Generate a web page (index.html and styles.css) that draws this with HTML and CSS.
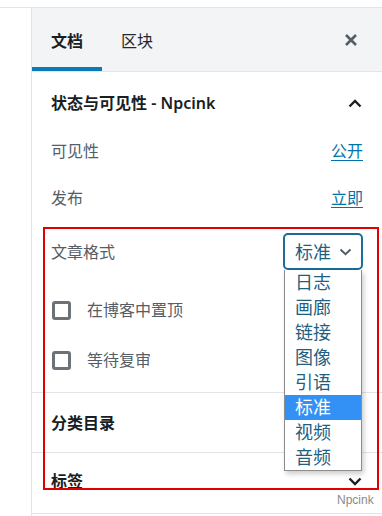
FILE: index.html
```html
<!DOCTYPE html>
<html lang="zh">
<head>
<meta charset="utf-8">
<title>文档设置</title>
<link rel="stylesheet" href="styles.css">
</head>
<body>
<div class="topbar"></div>
<div class="layout">
  <div class="gutter"></div>
  <aside class="panel">
    <div class="tabs">
      <div class="tab active">文档</div>
      <div class="tab">区块</div>
      <div class="spacer"></div>
      <button class="close" aria-label="关闭">
        <svg width="14" height="14" viewBox="0 0 14 14"><path d="M2 2 L12 12 M12 2 L2 12" stroke="#555d66" stroke-width="2.6" fill="none"/></svg>
      </button>
    </div>

    <section class="section">
      <div class="section-title">
        <span>状态与可见性 - Npcink</span>
        <svg class="chev" width="14" height="9" viewBox="0 0 14 9"><path d="M1.5 7.5 L7 2 L12.5 7.5" stroke="#1e1e1e" stroke-width="2.4" fill="none"/></svg>
      </div>
      <div class="row r1"><span class="label">可见性</span><a class="link">公开</a></div>
      <div class="row r2"><span class="label">发布</span><a class="link">立即</a></div>
      <div class="row format">
        <span class="label">文章格式</span>
        <div class="select-wrap">
          <div class="select">
            <span>标准</span>
            <svg width="13" height="8" viewBox="0 0 13 8"><path d="M1.5 1.5 L6.5 6.2 L11.5 1.5" stroke="#555d66" stroke-width="2" fill="none"/></svg>
          </div>
          <ul class="options">
            <li>日志</li>
            <li>画廊</li>
            <li>链接</li>
            <li>图像</li>
            <li>引语</li>
            <li class="selected">标准</li>
            <li>视频</li>
            <li>音频</li>
          </ul>
        </div>
      </div>
      <div class="check c1"><span class="box"></span><span class="label">在博客中置顶</span></div>
      <div class="check c2"><span class="box"></span><span class="label">等待复审</span></div>
    </section>

    <section class="section closed">
      <div class="section-title"><span>分类目录</span></div>
    </section>
    <section class="section closed last">
      <div class="section-title">
        <span>标签</span>
        <svg class="chev" width="14" height="9" viewBox="0 0 14 9"><path d="M1.5 1.5 L7 7 L12.5 1.5" stroke="#1e1e1e" stroke-width="2.4" fill="none"/></svg>
      </div>
    </section>
  </aside>
</div>
<div class="annotation"></div>
<div class="watermark">Npcink</div>
</body>
</html>
```

FILE: styles.css
```css
* { box-sizing: border-box; }
html, body { margin: 0; padding: 0; }
body {
  width: 382px;
  height: 516px;
  overflow: hidden;
  background: #fff;
  font-family: "Noto Sans", "Noto Sans CJK SC", sans-serif;
  color: #1e1e1e;
  position: relative;
}
.topbar {
  height: 8px;
  border-bottom: 1px solid #e2e4e7;
}
.layout {
  display: flex;
  height: 508px;
}
.gutter {
  width: 32px;
  border-right: 1px solid #e2e4e7;
}
.panel {
  flex: 1;
  display: flex;
  flex-direction: column;
}
.tabs {
  height: 64px;
  background: #f3f4f5;
  border-bottom: 1px solid #e2e4e7;
  display: flex;
  align-items: stretch;
}
.tab {
  padding: 0 19px;
  font-size: 16px;
  line-height: 20px;
  display: flex;
  align-items: center;
  padding-top: 2px;
  color: #23282d;
}
.tab.active {
  font-weight: 600;
  color: #191e23;
  box-shadow: inset 0 -4px 0 #0b7bb5;
}
.spacer { flex: 1; }
.close {
  border: 0;
  background: none;
  padding: 0;
  width: 14px;
  margin: 0 24px 0 0;
  display: flex;
  align-items: center;
}
.section {
  padding: 0 19px;
  border-bottom: 1px solid #e2e4e7;
}
.section-title {
  height: 62px;
  display: flex;
  align-items: center;
  justify-content: space-between;
  font-size: 16px;
  font-weight: 600;
  line-height: 20px;
  color: #191e23;
}
.chev { margin-right: 1px; }
.row {
  display: flex;
  align-items: center;
  justify-content: space-between;
  height: 34px;
  font-size: 16px;
  line-height: 20px;
}
.r2 { margin-top: 13px; }
.format { margin-top: 18px; height: 37px; }
.label { color: #555d66; }
.link {
  color: #0073aa;
  text-decoration: underline;
  text-underline-offset: 3px;
  cursor: pointer;
}
.select-wrap {
  position: relative;
  width: 80px;
  height: 37px;
}
.select {
  height: 37px;
  border: 2px solid #1a6c99;
  border-radius: 5px;
  display: flex;
  align-items: center;
  padding: 0 9px 0 10px;
  justify-content: space-between;
  font-size: 18px;
  line-height: 22px;
  color: #1f5f7f;
}
.options {
  position: absolute;
  left: 1px;
  top: 37px;
  width: 78px;
  margin: 0;
  padding: 0;
  list-style: none;
  background: #fff;
  border: 1px solid #8d8d8d;
  border-top: 0;
  box-shadow: 2px 3px 5px rgba(0,0,0,0.2);
  z-index: 2;
}
.options li {
  height: 25px;
  line-height: 25px;
  font-size: 18px;
  padding-left: 10px;
  color: #1f5f7f;
}
.options li.selected {
  background: #3390f5;
  color: #fff;
}
.check {
  display: flex;
  align-items: center;
  height: 20px;
  font-size: 16px;
  line-height: 20px;
}
.c1 { margin-top: 30px; }
.c2 { margin-top: 30px; margin-bottom: 22px; }
.box {
  width: 19px;
  height: 19px;
  border: 3px solid #6c7378;
  border-radius: 3px;
  margin: 0 16px 0 1px;
}
.section.closed .section-title { height: 59px; }
.section.last { padding-bottom: 4px; }
.section.last .section-title { height: 56px; }
.annotation {
  position: absolute;
  left: 43px;
  top: 227px;
  width: 336px;
  height: 263px;
  border: 2px solid #e00000;
  z-index: 3;
  pointer-events: none;
}
.watermark {
  position: absolute;
  left: 337px;
  top: 493px;
  font-family: "Liberation Sans", sans-serif;
  font-size: 12px;
  line-height: 14px;
  color: #8a8a8a;
}
```
